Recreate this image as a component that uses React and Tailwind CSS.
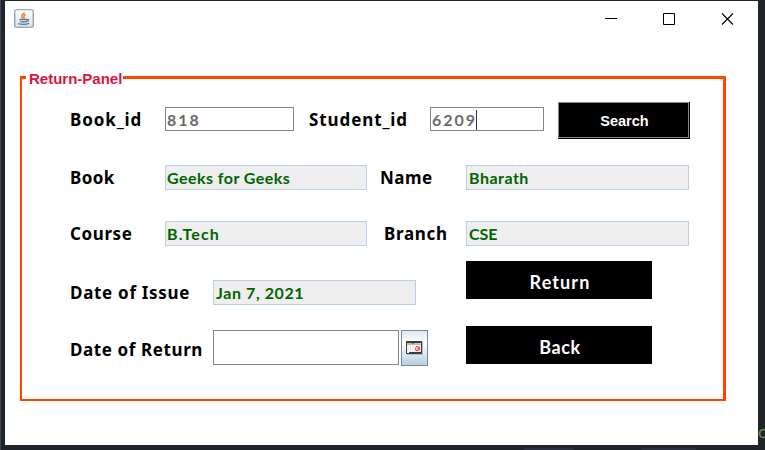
import React from "react";

const labelFont = "font-['Noto_Sans',sans-serif] font-bold text-[17px] leading-[26px] whitespace-nowrap text-black";
const valueFont = "font-['Lato',sans-serif] font-bold text-[16px] leading-[22px] whitespace-nowrap";

function Label({ className, children }) {
  return <label className={`${labelFont} block shrink-0 ${className}`}>{children}</label>;
}

function ReadOnly({ className, text }) {
  return (
    <div className={`h-[25px] shrink-0 border border-[#b8cfe5] bg-[#eeeeee] pt-px ${className}`}>
      <span className={`${valueFont} block text-[#006400]`}>{text}</span>
    </div>
  );
}

function Input({ className, caret, children }) {
  return (
    <div className={`flex shrink-0 border border-[#7a8a99] bg-white ${className}`}>
      {children}
      {caret && <span className="-ml-px mt-[2px] h-[20px] w-px bg-[#333333]" />}
    </div>
  );
}

function JavaIcon() {
  return (
    <svg width="20" height="19" viewBox="0 0 20 19" fill="none">
      <defs>
        <linearGradient id="java" x1="0" y1="0" x2="0" y2="1">
          <stop offset="0" stopColor="#ffffff" />
          <stop offset="1" stopColor="#dcdfe2" />
        </linearGradient>
      </defs>
      <rect x=".75" y=".75" width="18.5" height="17.5" rx="1.5" fill="url(#java)" stroke="#8496a5" strokeWidth="1.2" />
      <path d="M10.300 3.300c.5 1.500-2.900 2.300-2.700 4 .1.900 1 1.400 1.300 2.300M11.700 5.900c-1.200.3-2.200 1-1.800 1.800.4.6.5 1.100-.2 1.900" stroke="#ee8a3c" strokeWidth="1.600" />
      <path d="M5.500 10.500h7.500M6.300 12.300c1.700.8 4.500.8 6.400 0M13 10.500c2-.6 2.300 1.300-.2 2M4.300 14.500c2.500 1.200 8 1.200 10.800-.3" stroke="#587d9f" strokeWidth="1.300" />
    </svg>
  );
}

function CalendarIcon() {
  return (
    <svg width="17" height="14" viewBox="0 0 17 14" shapeRendering="crispEdges">
      <path d="M1 1h16v13H1z" fill="#bcbcbc" />
      <path d="M0 0h16v13H0z" fill="#3e3e3e" />
      <path d="M1 2h14v9H1z" fill="#f1f1ef" />
      <path d="M1 2h5v1H1z" fill="#f0b43c" />
      <path d="M6 2h2v1H6z" fill="#777" />
      <path d="M8 2h6v1H8z" fill="#a9c6e8" />
      <path d="M1 3h14v1H1z" fill="#bcbcbc" />
      <path d="M3 5h1v6H3zM5 5h1v6H5zM7 8h1v3H7z" fill="#fff" />
      <path d="M4 5h1v6H4z" fill="#ddd" />
      <path d="M10 5h2v1h-2zM9 7h1v2H9zM10 9h2v1h-2zM12 6h2v3h-2z" fill="#ec5656" />
      <path d="M9 6h1v1H9zM10 6h2v3h-2zM9 9h1v1H9zM12 5h2v1h-2zM12 9h2v1h-2z" fill="#f7b5b5" />
      <path d="M1 11h2v1H1z" fill="#fff" />
    </svg>
  );
}

function TitleBar() {
  return (
    <header className="flex h-[36px] items-start justify-between pl-[9px] pr-[24px] pt-[8px]">
      <JavaIcon />
      <div className="flex pt-[4px]">
        <svg width="130" height="13" viewBox="0 0 130 13" fill="none" stroke="#000">
          <path d="M1 5.500h12" />
          <path d="M59.500.5h11v11h-11z" />
          <path d="M118 .5l11 11M129 .5l-11 11" strokeWidth="1.100" />
        </svg>
      </div>
    </header>
  );
}

export default function App() {
  return (
    <div className="relative h-[450px] w-[765px] overflow-hidden border-l border-[#3d4852] bg-[#21252b] pl-[4px] pt-px">
      <main className="h-[444px] w-[753px] bg-white">
        <TitleBar />
        <div className="pl-[15px] pt-[39px]">
          <section className="h-[325px] w-[706px] border-b-2 border-l-2 border-r-[3px] border-t-[3px] border-[#ff4500]">
            <h1 className="-mt-[10px] ml-[4px] h-[20px] w-[97px] whitespace-nowrap bg-white pl-[3px] font-['Liberation_Sans',Arial,sans-serif] text-[15px] font-bold leading-[20px] text-[#dc143c]">
              Return-Panel
            </h1>

            <div className="ml-[48px] mt-[13px] flex h-[37px] items-start">
              <Label className="w-[95px] pt-[5px] tracking-[0.9px]">Book_id</Label>
              <Input className="mt-[5px] h-[24px] w-[129px] pl-[1px]">
                <span className={`${valueFont} pt-px tracking-[2px] text-[#696969]`}>818</span>
              </Input>
              <Label className="ml-[15px] w-[121px] pt-[5px] tracking-[0.9px]">Student_id</Label>
              <Input caret className="mt-[5px] h-[24px] w-[114px] pl-[1px]">
                <span className={`${valueFont} pt-px tracking-[2px] text-[#696969]`}>6209</span>
              </Input>
              <button className="ml-[14px] h-[37px] w-[132px] border-b border-r border-black bg-black">
                <span className="block h-[36px] border border-[#7a8a99] pl-[2px] text-center font-['Liberation_Sans',Arial,sans-serif] text-[14.5px] font-bold leading-[36px] text-white">
                  Search
                </span>
              </button>
            </div>

            <div className="ml-[48px] mt-[26px] flex h-[25px] items-start">
              <Label className="w-[95px] tracking-[0.4px]">Book</Label>
              <ReadOnly className="w-[202px] pl-px tracking-[0.45px]" text="Geeks for Geeks" />
              <Label className="ml-[13px] w-[86px] tracking-[0.5px]">Name</Label>
              <ReadOnly className="w-[223px] pl-[2px] tracking-[0.5px]" text="Bharath" />
            </div>

            <div className="ml-[48px] mt-[31px] flex h-[25px] items-start">
              <Label className="w-[95px] tracking-[0.6px]">Course</Label>
              <ReadOnly className="w-[202px] pl-px tracking-[1.1px]" text="B.Tech" />
              <Label className="ml-[17px] w-[82px] tracking-[0.7px]">Branch</Label>
              <ReadOnly className="w-[223px] pl-[2px] tracking-[0px]" text="CSE" />
            </div>

            <div className="ml-[48px] mt-[15px] flex">
              <div className="w-[396px]">
                <div className="flex h-[44px] pt-[19px]">
                  <Label className="w-[143px] tracking-[0.7px]">Date of Issue</Label>
                  <ReadOnly className="w-[203px] pl-[2px] tracking-[0.6px]" text="Jan 7, 2021" />
                </div>
                <div className="mt-[25px] flex">
                  <Label className="w-[143px] pt-[7px] tracking-[0.6px]">Date of Return</Label>
                  <Input className="h-[35px] w-[186px]" />
                  <button className="ml-[2px] flex h-[36px] w-[27px] items-center justify-center border border-[#7a8a99] bg-linear-to-b from-[#dde8f3] via-white via-35% to-[#b8cfe5]">
                    <CalendarIcon />
                  </button>
                </div>
              </div>
              <div className="flex flex-col gap-[27px]">
                <button className="h-[38px] w-[186px] bg-black pl-[2px] pt-[4px] text-center font-['Lato',sans-serif] text-[18px] font-bold leading-[33px] tracking-[1.1px] text-white">Return</button>
                <button className="h-[38px] w-[186px] bg-black pl-[2px] pt-[4px] text-center font-['Lato',sans-serif] text-[18px] font-bold leading-[33px] tracking-[0.6px] text-white">Back</button>
              </div>
            </div>
          </section>
        </div>
      </main>
      <div className="flex pl-[519px] pt-[3px]">
        <span className="h-[2px] w-[50px] rounded-t-sm bg-[#2b3040]" />
        <span className="ml-[67px] h-[2px] w-[55px] rounded-t-sm bg-[#2b3040]" />
      </div>
      <span className="absolute left-[757px] top-[422px] font-['Noto_Sans',sans-serif] text-[16px] leading-[20px] text-[#6a9955]">c</span>
    </div>
  );
}
